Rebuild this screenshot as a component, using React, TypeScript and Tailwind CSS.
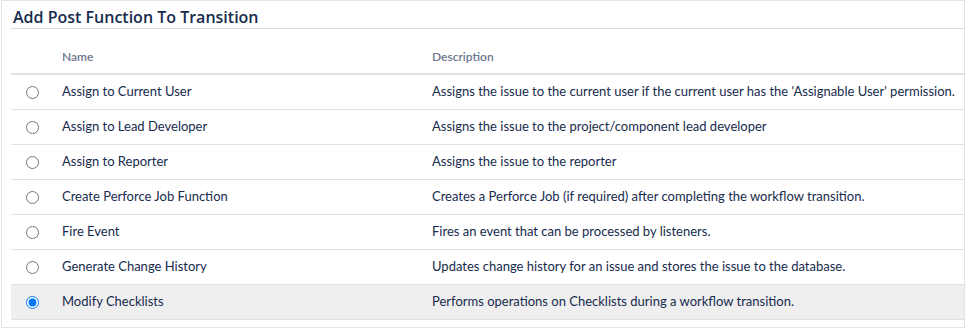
import React from "react";

const rows = [
  { name: "Assign to Current User", desc: "Assigns the issue to the current user if the current user has the 'Assignable User' permission." },
  { name: "Assign to Lead Developer", desc: "Assigns the issue to the project/component lead developer" },
  { name: "Assign to Reporter", desc: "Assigns the issue to the reporter" },
  { name: "Create Perforce Job Function", desc: "Creates a Perforce Job (if required) after completing the workflow transition." },
  { name: "Fire Event", desc: "Fires an event that can be processed by listeners." },
  { name: "Generate Change History", desc: "Updates change history for an issue and stores the issue to the database." },
  { name: "Modify Checklists", desc: "Performs operations on Checklists during a workflow transition.", selected: true },
];

const App = () => {
  return (
    <div className="w-[966px] h-[329px] bg-white overflow-hidden" style={{ fontFamily: "Lato, 'Open Sans', sans-serif" }}>
      <div className="ml-px w-[964px] h-[328px] border border-[#e4e4e4] pl-[9px]">
        {/* Title */}
        <div className="border-b border-[#dcdcdc] h-[28px] pt-[7px]">
          <h2 className="text-[16px] leading-[19px] font-semibold text-[#172b4d] pl-[2px]" style={{ fontFamily: "'Open Sans', sans-serif" }}>
            Add Post Function To Transition
          </h2>
        </div>

        {/* Table */}
        <div className="text-[13px] text-[#172b4d]">
          <div className="grid grid-cols-[42px_370px_1fr] h-[46px] items-end pb-[7px] border-b-2 border-[#dfe1e6] text-[12px] font-semibold text-[#6b778c]">
            <div />
            <div className="pl-[9px]">Name</div>
            <div className="pl-[9px]">Description</div>
          </div>

          {rows.map((row) => (
            <div
              key={row.name}
              className={`grid grid-cols-[42px_370px_1fr] h-[35px] items-center border-b border-[#dfe1e6] ${row.selected ? "bg-[#efefef]" : "bg-white"}`}
            >
              <div className="flex justify-center">
                <input type="radio" name="postfn" checked={!!row.selected} readOnly className="m-0 w-[13px] h-[13px]" />
              </div>
              <div className="pl-[9px] whitespace-nowrap">{row.name}</div>
              <div className="pl-[9px] whitespace-nowrap">{row.desc}</div>
            </div>
          ))}
        </div>
      </div>
    </div>
  );
};

export default App;
